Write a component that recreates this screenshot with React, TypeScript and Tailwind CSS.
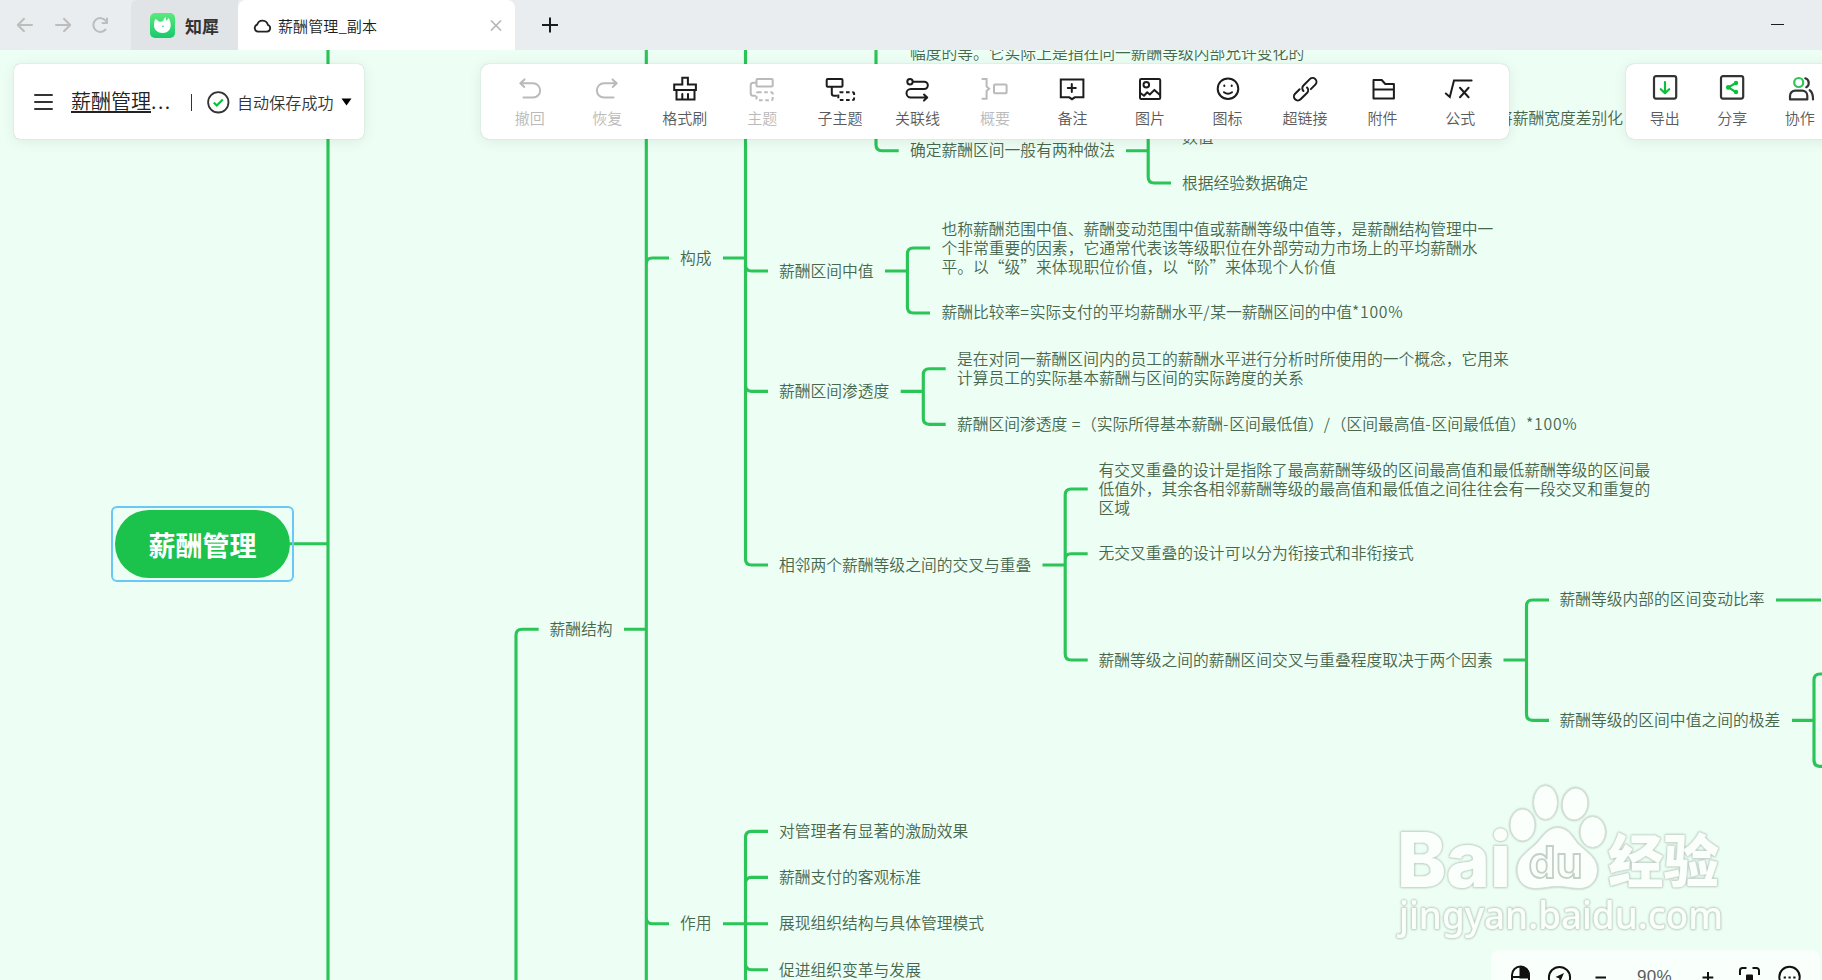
import React from 'react';

const OFFSET_Y = 50;

type MindNode = { x: number; y: number; lines: string[] };

const nodes: MindNode[] = [
  { x: 910, y: 53.5, lines: ['幅度的等。它实际上是指在同一薪酬等级内部允许变化的'] },
  { x: 1497, y: 118.5, lines: ['将薪酬宽度差别化'] },
  { x: 1182, y: 137, lines: ['数值'] },
  { x: 910, y: 150.5, lines: ['确定薪酬区间一般有两种做法'] },
  { x: 1182, y: 183.5, lines: ['根据经验数据确定'] },
  { x: 680, y: 258.5, lines: ['构成'] },
  { x: 779, y: 271.5, lines: ['薪酬区间中值'] },
  {
    x: 941.5,
    y: 248.5,
    lines: [
      '也称薪酬范围中值、薪酬变动范围中值或薪酬等级中值等，是薪酬结构管理中一',
      '个非常重要的因素，它通常代表该等级职位在外部劳动力市场上的平均薪酬水',
      '平。以“级”来体现职位价值，以“阶”来体现个人价值',
    ],
  },
  { x: 941.5, y: 312.5, lines: ['薪酬比较率=实际支付的平均薪酬水平/某一薪酬区间的中值*100%'] },
  { x: 779, y: 391.5, lines: ['薪酬区间渗透度'] },
  {
    x: 957,
    y: 369,
    lines: ['是在对同一薪酬区间内的员工的薪酬水平进行分析时所使用的一个概念，它用来', '计算员工的实际基本薪酬与区间的实际跨度的关系'],
  },
  { x: 957, y: 424.5, lines: ['薪酬区间渗透度 =（实际所得基本薪酬-区间最低值）/（区间最高值-区间最低值）*100%'] },
  { x: 779, y: 565.5, lines: ['相邻两个薪酬等级之间的交叉与重叠'] },
  {
    x: 1098.5,
    y: 489.5,
    lines: [
      '有交叉重叠的设计是指除了最高薪酬等级的区间最高值和最低薪酬等级的区间最',
      '低值外，其余各相邻薪酬等级的最高值和最低值之间往往会有一段交叉和重复的',
      '区域',
    ],
  },
  { x: 1098.5, y: 553.5, lines: ['无交叉重叠的设计可以分为衔接式和非衔接式'] },
  { x: 1098.5, y: 660.5, lines: ['薪酬等级之间的薪酬区间交叉与重叠程度取决于两个因素'] },
  { x: 1559.5, y: 599.5, lines: ['薪酬等级内部的区间变动比率'] },
  { x: 1559.5, y: 720.5, lines: ['薪酬等级的区间中值之间的极差'] },
  { x: 549.5, y: 629.5, lines: ['薪酬结构'] },
  { x: 779, y: 831.5, lines: ['对管理者有显著的激励效果'] },
  { x: 779, y: 877.5, lines: ['薪酬支付的客观标准'] },
  { x: 680, y: 923.5, lines: ['作用'] },
  { x: 779, y: 923.5, lines: ['展现组织结构与具体管理模式'] },
  { x: 779, y: 970, lines: ['促进组织变革与发展'] },
];

const connectors = [
  'M290 543.7H328M328 40V990',
  // level 1 branch
  'M516 990V635.2Q516 629.2 522 629.2H538.7M624 629.2H646.3',
  // level 2 trunk and its branches
  'M646.3 40V990M646.3 264Q646.3 258 652.3 258H669M646.3 917.7Q646.3 923.7 652.3 923.7H669',
  'M723 258H745.5M745.5 40V559Q745.5 565 751.5 565H768',
  'M745.5 265Q745.5 271 751.5 271H768M745.5 385.3Q745.5 391.3 751.5 391.3H768',
  // upper range group
  'M876 40V144.7Q876 150.7 882 150.7H898.7M1126 150.7H1148.2',
  'M1148.2 120V177Q1148.2 183 1154.2 183H1171',
  // midpoint group
  'M885 271H907.4M930 248H913.4Q907.4 248 907.4 254V307Q907.4 313 913.4 313H930',
  // penetration group
  'M900.7 391.3H923.3M945.7 368.7H929.3Q923.3 368.7 923.3 374.7V418.3Q923.3 424.3 929.3 424.3H945.7',
  // overlap group
  'M1042.5 565H1065.2M1087.7 489H1071.2Q1065.2 489 1065.2 495V654Q1065.2 660 1071.2 660H1087.7M1065.2 559.7Q1065.2 553.7 1071.2 553.7H1087.7',
  // factors group
  'M1503.5 660H1526.5M1549 600H1532.5Q1526.5 600 1526.5 606V714.3Q1526.5 720.3 1532.5 720.3H1549',
  'M1776 600H1821M1792 720.3H1814M1830 674H1820Q1814 674 1814 680V760.3Q1814 766.3 1820 766.3H1830',
  // purpose group
  'M723 923.7H768M768 831.3H751.5Q745.5 831.3 745.5 837.3V990M745.5 883.3Q745.5 877.3 751.5 877.3H768M745.5 963.7Q745.5 969.7 751.5 969.7H768',
];

function Icon({ children, width = 2 }: { children: React.ReactNode; width?: number }) {
  return (
    <svg
      className="size-[30px] overflow-visible"
      viewBox="0 0 30 30"
      fill="none"
      stroke="currentColor"
      strokeWidth={width}
      strokeLinecap="round"
      strokeLinejoin="round"
    >
      {children}
    </svg>
  );
}

const tools: { label: string; disabled?: boolean; icon: React.ReactNode }[] = [
  {
    label: '撤回',
    disabled: true,
    icon: <path d="M9.5 5.4 5.3 9.3l4 3.6M5.6 9.3H18a7.1 7.1 0 0 1 0 14.3H8.5" />,
  },
  {
    label: '恢复',
    disabled: true,
    icon: <path d="M20.5 5.4l4.2 3.9-4 3.6M24.4 9.3H12a7.1 7.1 0 0 0 0 14.3h9.5" />,
  },
  {
    label: '格式刷',
    icon: (
      <path strokeLinejoin="miter" d="M12.3 10.6V3.8h5.6v6.8h8v5.3H4.2v-5.3zM6.5 16v9.4h18V16M12.3 25v-5M18 25v-5" />
    ),
  },
  {
    label: '主题',
    disabled: true,
    icon: (
      <>
        <rect x="9.5" y="5" width="16.2" height="7.5" rx="1" />
        <path d="M9 8.7H6.2a2.5 2.5 0 0 0-2.5 2.5v8a2.5 2.5 0 0 0 2.5 2.5H8" />
        <rect x="9.5" y="18.3" width="16.2" height="8" rx="1.5" strokeDasharray="3.6 2.6" strokeLinecap="butt" />
      </>
    ),
  },
  {
    label: '子主题',
    icon: (
      <>
        <rect x="1.7" y="5" width="15.8" height="7.8" rx="1" />
        <path d="M6.8 13v6.5a2.3 2.3 0 0 0 2.3 2.3h2.4" />
        <rect x="13.3" y="18.3" width="15.8" height="7.8" rx="1.5" strokeDasharray="3.6 2.6" strokeLinecap="butt" />
      </>
    ),
  },
  {
    label: '关联线',
    icon: (
      <>
        <circle cx="8" cy="7.7" r="2.7" />
        <path d="M11 7.7h11.2a3.65 3.65 0 0 1 0 7.3H8.8a4.3 4.3 0 0 0 0 8.6h16M22 20.6l3.2 3-3.2 3" />
      </>
    ),
  },
  {
    label: '概要',
    disabled: true,
    icon: (
      <>
        <path strokeLinejoin="miter" d="M2.4 5h4.2v7.6l2.5 2.2-2.5 2.2v7.7H2.4" />
        <rect x="14" y="10.5" width="12.6" height="8.8" rx="1" />
      </>
    ),
  },
  {
    label: '备注',
    icon: <path strokeLinejoin="miter" d="M3.8 5.5h22.6v17.8h-8.6L15 25.2l-2.8-1.9H3.8zM14.8 10v8M10.8 14h8" />,
  },
  {
    label: '图片',
    icon: (
      <>
        <rect x="5" y="5" width="20.2" height="20" rx="1.2" />
        <circle cx="11.3" cy="10.8" r="2.8" />
        <path d="M5 18.7l4 3 3.2-3.4 2.6 2.2 4.6-4.6 5.6 5.2" />
      </>
    ),
  },
  {
    label: '图标',
    icon: (
      <>
        <circle cx="15" cy="14.7" r="10.3" />
        <path d="M11.3 11.4v.7M18.7 11.4v.7M11 18.2q4 3 8 0" />
      </>
    ),
  },
  {
    label: '超链接',
    icon: (
      <g transform="rotate(-45 15 15)">
        <path d="M11 11.4H4.6a3.9 3.9 0 0 0 0 7.8h9a3.9 3.9 0 0 0 3.9-3.9M19 19.2h6.4a3.9 3.9 0 0 0 0-7.8h-9a3.9 3.9 0 0 0-3.9 3.9" />
      </g>
    ),
  },
  {
    label: '附件',
    icon: <path d="M5.5 24.6V6h8.2l3.6 4h8.6v14.6zM5.5 15.6h20.4" />,
  },
  {
    label: '公式',
    icon: <path strokeLinejoin="miter" d="M.8 19.5l4 3.4L9 6.5h17.6M15 13.8l8.6 9.4M23.6 13.8L15 23.2" />,
  },
];

const actions: { label: string; icon: React.ReactNode }[] = [
  {
    label: '导出',
    icon: (
      <>
        <rect x="4" y="2.2" width="22.2" height="22.4" rx="2" />
        <path stroke="#0bbf3b" d="M15 8v11M10.8 15.2l4.2 4 4.2-4" />
      </>
    ),
  },
  {
    label: '分享',
    icon: (
      <>
        <rect x="4" y="2.2" width="22.2" height="22.4" rx="2" />
        <path stroke="#0bbf3b" d="M18.8 9l-7.4 4.4 7.4 4.6" />
        <g fill="#0bbf3b" stroke="none">
          <circle cx="11.2" cy="13.4" r="2.3" />
          <circle cx="19" cy="9" r="2.2" />
          <circle cx="19" cy="18" r="2.2" />
        </g>
      </>
    ),
  },
  {
    label: '协作',
    icon: (
      <>
        <circle cx="13.7" cy="8.5" r="4.5" stroke="#2fc457" />
        <path d="M5 25.4v-3.6a5.2 5.2 0 0 1 5.2-5.2h6.9a5.2 5.2 0 0 1 5.2 5.2v3.6zM20.3 4.3c4.4 1.3 4.4 7.2 1 8.9M24.7 16.2c2.7 1.7 3.3 4 3.3 9.2" />
      </>
    ),
  },
];

function TopBar() {
  return (
    <header className="relative z-10 flex h-[50px] shrink-0 bg-[#e9edf0] text-[#1c1c1c]">
      <div className="flex w-[131px] items-center text-[#bdbdbd]">
        <svg
          className="h-[50px] w-[131px]"
          viewBox="0 0 131 50"
          fill="none"
          stroke="currentColor"
          strokeWidth="2"
          strokeLinecap="round"
          strokeLinejoin="round"
        >
          <path d="M32 25H18M24 18.8L17.8 25l6.2 6.2M56 25h14M64 18.8l6.2 6.2-6.2 6.2" />
          <path d="M105.500 29.5a6.9 6.9 0 1 1 .4-8.5M107 18.5v4.500h-4.500" />
        </svg>
      </div>
      <div className="flex w-[107px] items-center rounded-tl-md bg-[#e0e4e7] pl-[19px]">
        <svg className="size-[25px]" viewBox="0 0 25 25">
          <defs>
            <linearGradient id="brand" x1="0" y1="0" x2="0" y2="1">
              <stop offset="0" stopColor="#5bea7c" />
              <stop offset="1" stopColor="#16c96f" />
            </linearGradient>
          </defs>
          <rect width="25" height="25" rx="5" fill="url(#brand)" />
          <path
            fill="#fff"
            d="M5 6.5c1-.8 2.5.8 3.8 2 1.7.4 3.2.2 4.6-.8.2-1.6 1.2-3 2.7-3.6-.5 1.5-.3 2.5.3 3.6l2.400-2.600c.9 1.800 1.900 4.600 1.900 7.200 0 4.500-3.200 7.700-8 7.700-5 0-8.700-3.200-8.700-7.500 0-2 .4-4.400 1-6z"
          />
          <path fill="#22cf72" d="M11.6 12.8h2.6l-1.3 1.5z" />
        </svg>
        <span className="ml-[10px] text-[17px] font-semibold leading-none text-[#333]">知犀</span>
      </div>
      <div className="flex w-[277px] items-center rounded-t-lg bg-white pl-[15px] pr-[13px]">
        <svg className="size-[19px]" viewBox="0 0 19 19" fill="none" stroke="#222" strokeWidth="1.8" strokeLinejoin="round">
          <path d="M5 15.6h9a3.4 3.4 0 0 0 .9-6.6A5.5 5.5 0 0 0 4.2 8.6 3.6 3.6 0 0 0 5 15.600z" />
        </svg>
        <span className="ml-[6px] text-[15px] leading-none tracking-[0.1px]">薪酬管理_副本</span>
        <svg className="ml-auto size-[12px]" viewBox="0 0 12 12" fill="none" stroke="#b5b5b5" strokeWidth="1.6">
          <path d="M1 1.5l10 10M11 1.5l-10 10" />
        </svg>
      </div>
      <svg className="ml-[26px] mt-[16px] size-[18px]" viewBox="0 0 18 18" stroke="#1c1c1c" strokeWidth="2">
        <path d="M1 9h16M9 1.5v15" />
      </svg>
      <div className="ml-auto mr-[38px] mt-[24px] h-px w-[13px] bg-[#1c1c1c]" />
    </header>
  );
}

function TitleCard() {
  return (
    <section className="absolute left-[14px] top-[14px] flex h-[75px] w-[350px] items-center rounded-md bg-white pl-[19px] text-[#222] shadow-[0_0_1px_rgba(0,0,0,0.3),0_2px_14px_rgba(0,0,0,0.08)]">
      <svg className="size-[20px]" viewBox="0 0 20 20" stroke="#333" strokeWidth="2" strokeLinecap="round">
        <path d="M2 3h17M2 10h17M2 17h17" />
      </svg>
      <span className="-mt-[2px] ml-[18px] text-[20px] leading-[26px]">
        <span className="underline decoration-2 underline-offset-2">薪酬管理</span>
        <span className="tracking-[1.5px]">...</span>
      </span>
      <span className="absolute left-[177px] top-[30px] h-[17px] w-px bg-[#333]" />
      <svg className="absolute left-[192px] top-[26px] size-[24px]" viewBox="0 0 24 24" fill="none" strokeWidth="2">
        <circle cx="12.3" cy="12.3" r="10.2" stroke="#333" strokeWidth="1.8" />
        <path d="M7.800 12.5l3 3 6-6" stroke="#0bbf3b" strokeWidth="2.2" />
      </svg>
      <span className="absolute left-[223px] top-[28px] whitespace-nowrap text-[16px] leading-[20px] tracking-[0.1px] text-[#333]">
        自动保存成功
      </span>
      <svg className="absolute left-[327px] top-[34px] h-[8px] w-[11px]" viewBox="0 0 11 8">
        <path d="M.5.5h10L5.5 7.5z" fill="#000" />
      </svg>
    </section>
  );
}

function Toolbar() {
  return (
    <nav className="absolute left-[481px] top-[14px] flex h-[75px] w-[1028px] rounded-lg bg-white px-[10px] pt-[10px] shadow-[0_0_1px_rgba(0,0,0,0.3),0_2px_14px_rgba(0,0,0,0.08)]">
      {tools.map((tool) => (
        <div
          key={tool.label}
          className={
            tool.disabled
              ? 'flex flex-1 flex-col items-center text-[#bababa]'
              : 'flex flex-1 flex-col items-center text-[#1c1c1c]'
          }
        >
          <Icon>{tool.icon}</Icon>
          <span
            className={
              tool.disabled ? 'mt-[4px] text-[15px] leading-[20px]' : 'mt-[4px] text-[15px] leading-[20px] text-[#5a5a5a]'
            }
          >
            {tool.label}
          </span>
        </div>
      ))}
    </nav>
  );
}

function ActionBar() {
  return (
    <nav className="absolute left-[1626px] top-[14px] flex h-[75px] w-[300px] rounded-lg bg-white pl-[5px] pt-[10px] shadow-[0_0_1px_rgba(0,0,0,0.3),0_2px_14px_rgba(0,0,0,0.08)]">
      {actions.map((action) => (
        <div key={action.label} className="flex w-[67.5px] flex-col items-center text-[#333]">
          <Icon width={2.2}>{action.icon}</Icon>
          <span className="mt-[4px] text-[15px] leading-[20px] text-[#5a5a5a]">{action.label}</span>
        </div>
      ))}
    </nav>
  );
}

function ZoomBar() {
  return (
    <section className="absolute left-[1491px] top-[900px] flex h-[54px] w-[329px] rounded-lg bg-white/65 text-black">
      <svg className="h-[54px] w-[329px]" viewBox="1491 950 329 54" fill="none" stroke="#111" strokeWidth="2">
        <path d="M1512 992V975a8.5 8.5 0 0 1 17 0v17M1512 977h17" />
        <path d="M1520.5 967a8.5 8.5 0 0 1 8.5 8.5v2h-8.5z" fill="#111" />
        <circle cx="1559.5" cy="977.5" r="10.6" />
        <path d="M1564 973l-8.5 4 3.5 1.2 1.2 3.6z" fill="#111" stroke="none" />
        <path d="M1595.5 977.5h10.5M1702.5 977.5h10.8M1708 972v11" />
        <path d="M1740 975v-4.5a2.5 2.5 0 0 1 2.5-2.5h4M1752.5 968h4a2.5 2.5 0 0 1 2.5 2.5v4.5" />
        <rect x="1746" y="974.5" width="7" height="7" rx="1" fill="#111" stroke="none" />
        <circle cx="1789.5" cy="977" r="10.2" />
        <path d="M1783.7 977.5h2.2M1788.500 977.500h2.200M1793.300 977.500h2.200" />
      </svg>
      <span className="absolute left-[146px] top-[16px] font-['Liberation_Sans'] text-[17px] leading-[22px] tracking-[0.3px] text-[#5c5c5c]">
        90%
      </span>
    </section>
  );
}

function Watermark() {
  return (
    <svg
      className="absolute left-[1380px] top-[720px] h-[180px] w-[360px] drop-shadow-[0_0_1px_rgba(80,100,85,0.5)]"
      viewBox="0 0 360 180"
      fill="#fbfffc"
      stroke="#d3ded6"
      strokeWidth="1"
    >
      <text
        x="17"
        y="117"
        fontFamily="Inter"
        fontWeight="800"
        fontSize="76"
        textLength="114"
        lengthAdjust="spacingAndGlyphs"
        paintOrder="stroke"
      >
        Bai
      </text>
      <ellipse cx="142.5" cy="55" rx="12.5" ry="16" />
      <ellipse cx="165.5" cy="32.5" rx="12" ry="17" />
      <ellipse cx="195" cy="34" rx="12.7" ry="16" transform="rotate(8 195 34)" />
      <ellipse cx="212.7" cy="62" rx="12.7" ry="15.5" />
      <path d="M177.5 57.5c9 0 14 7 18 13 6 9 22 15 22 29 0 12-8 19-18 19-8 0-14-2-22-2s-14 2-22 2c-11 0-18.5-7-18.5-19 0-14 15-20 22-29 5-6 10-13 18.5-13z" />
      <text
        x="148.5"
        y="108"
        fontFamily="Inter"
        fontWeight="700"
        fontSize="44"
        textLength="54"
        lengthAdjust="spacingAndGlyphs"
        stroke="#c3d0c6"
        strokeWidth="1.8"
      >
        du
      </text>
      <text
        x="228"
        y="112"
        fontFamily="Noto Sans CJK SC"
        fontWeight="900"
        fontSize="57"
        textLength="111"
        lengthAdjust="spacingAndGlyphs"
        paintOrder="stroke"
      >
        经验
      </text>
      <text
        x="19"
        y="159"
        fontFamily="Noto Sans"
        fontWeight="500"
        fontSize="38"
        textLength="324"
        lengthAdjust="spacingAndGlyphs"
        paintOrder="stroke"
      >
        jingyan.baidu.com
      </text>
    </svg>
  );
}

// Latin letters, digits and operators are set slightly wider than the Chinese text around them.
function MixedText({ text }: { text: string }) {
  return (
    <>
      {text.split(/([ -~]+)/).map((part, i) =>
        i % 2 === 1 ? (
          <span key={i} className="tracking-[0.75px]">
            {part}
          </span>
        ) : (
          part
        ),
      )}
    </>
  );
}

function MindMap() {
  return (
    <>
      <svg
        className="absolute left-0 top-0 h-[930px] w-[1822px]"
        viewBox="0 50 1822 930"
        fill="none"
        stroke="#2ac457"
        strokeWidth="3.15"
      >
        {connectors.map((d) => (
          <path key={d} d={d} />
        ))}
      </svg>
      <div className="absolute left-[111px] top-[456px] flex h-[76px] w-[183px] items-center justify-center rounded-md border-2 border-[#69c8f7]">
        <div className="flex h-[68px] w-[175px] items-center justify-center rounded-full bg-[#1bc24b] pt-px text-[27px] font-bold leading-none text-white">
          薪酬管理
        </div>
      </div>
      {nodes.map((node) => (
        <p
          key={node.lines[0]}
          className="absolute whitespace-nowrap text-[15.77px] font-[350] leading-[19px] text-[#48674f]"
          style={{ left: node.x, top: Math.round(node.y - OFFSET_Y - node.lines.length * 9.5) - 1 }}
        >
          {node.lines.map((line) => (
            <span key={line} className="block">
              <MixedText text={line} />
            </span>
          ))}
        </p>
      ))}
    </>
  );
}

export default function App() {
  return (
    <div className="flex h-[980px] w-[1822px] flex-col overflow-hidden bg-[#edfff4] font-['Noto_Sans_CJK_SC',sans-serif] font-[350]">
      <TopBar />
      <main className="relative flex-1 overflow-hidden">
        <MindMap />
        <Watermark />
        <TitleCard />
        <Toolbar />
        <ActionBar />
        <ZoomBar />
      </main>
    </div>
  );
}
